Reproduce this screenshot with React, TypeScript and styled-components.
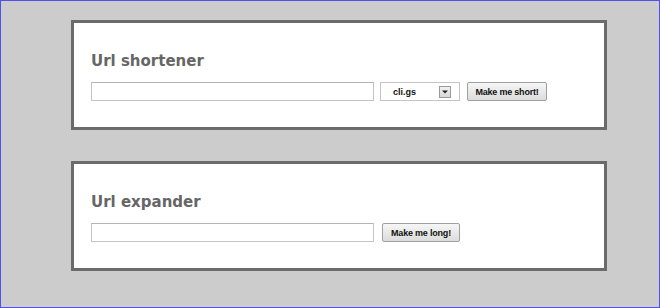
import React from 'react';
import styled, { createGlobalStyle } from 'styled-components';

const GlobalStyle = createGlobalStyle`
  html, body {
    margin: 0;
    padding: 0;
    background: #cccccc;
  }
`;

const Page = styled.div`
  box-sizing: border-box;
  width: 660px;
  height: 308px;
  border: 1px solid #5050f0;
  background: #cccccc;
  padding: 19px 0 0 70px;
  display: flex;
  flex-direction: column;
  gap: 31px;
`;

const Card = styled.section`
  box-sizing: border-box;
  width: 536px;
  background: #ffffff;
  border: 3px solid #6b6b6b;
  padding: 27px 17px 26px;
`;

const Title = styled.h2`
  margin: 0 0 10px;
  font-family: 'DejaVu Sans', Verdana, sans-serif;
  font-weight: bold;
  font-size: 15px;
  line-height: 22px;
  color: #666666;
`;

const Row = styled.div`
  display: flex;
  align-items: center;
`;

const TextInput = styled.input`
  box-sizing: border-box;
  width: 283px;
  height: 19px;
  margin: 0 ${(p: { $gap: number }) => p.$gap}px 0 0;
  padding: 1px 3px;
  border: 1px solid #c4c4c4;
  border-top-color: #b4b4b4;
  background: #fff;
  font-family: 'Liberation Sans', Arial, sans-serif;
  font-size: 11px;
  outline: none;
`;

const Select = styled.div`
  box-sizing: border-box;
  width: 80px;
  height: 19px;
  margin-right: 7px;
  border: 1px solid #c4c4c4;
  background: #fff;
  display: flex;
  align-items: center;
  padding: 0 8px 0 12px;
  font-family: 'Liberation Sans', Arial, sans-serif;
  font-weight: bold;
  font-size: 9px;
  color: #111;
`;

const SelectText = styled.span`
  flex: 1;
`;

const Arrow = styled.span`
  box-sizing: border-box;
  width: 12px;
  height: 12px;
  border: 1px solid #9a9a9a;
  background: linear-gradient(#f2f2f2, #d8d8d8);
  display: flex;
  align-items: center;
  justify-content: center;
`;

const Button = styled.button`
  box-sizing: border-box;
  width: ${(p: { $w: number }) => p.$w}px;
  height: 19px;
  padding: 0;
  border: 1px solid #a0a0a0;
  border-radius: 2px;
  background: linear-gradient(#f6f6f6, #dcdcdc);
  font-family: 'Liberation Sans', Arial, sans-serif;
  font-weight: bold;
  font-size: 9px;
  letter-spacing: -0.2px;
  color: #111;
  cursor: pointer;
`;

export default function App() {
  return (
    <>
      <GlobalStyle />
      <Page>
        <Card>
          <Title>Url shortener</Title>
          <Row>
            <TextInput type="text" $gap={6} />
            <Select>
              <SelectText>cli.gs</SelectText>
              <Arrow>
                <svg width="6" height="4" viewBox="0 0 6 4">
                  <path d="M0 0.5 L6 0.5 L3 3.5 Z" fill="#222" />
                </svg>
              </Arrow>
            </Select>
            <Button type="button" $w={80}>Make me short!</Button>
          </Row>
        </Card>
        <Card>
          <Title>Url expander</Title>
          <Row>
            <TextInput type="text" $gap={8} />
            <Button type="button" $w={78}>Make me long!</Button>
          </Row>
        </Card>
      </Page>
    </>
  );
}
